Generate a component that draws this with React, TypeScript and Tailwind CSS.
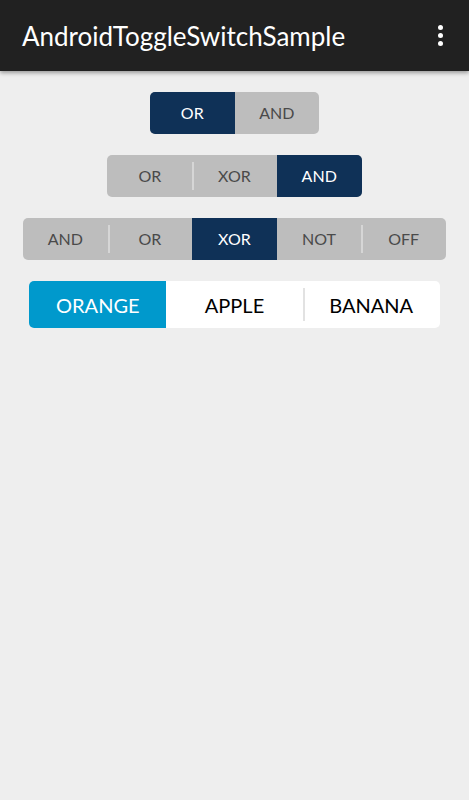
import React from "react";

const NAVY = "bg-[#0f3157]";

function Toggle({ labels, selected, w, h, textSize, selBg, baseBg, textColor, sepColor, rounded }: {
  labels: string[]; selected: number; w: string; h: string; textSize: string; selBg: string; baseBg: string; textColor: string; sepColor: string; rounded: string;
}) {
  return (
    <div className={`flex ${h} ${baseBg} ${rounded} overflow-hidden`}>
      {labels.map((l, i) => {
        const sel = i === selected;
        const showSep = i > 0 && !sel && i - 1 !== selected;
        return (
          <div key={l} className={`relative ${w} flex items-center justify-center ${textSize} ${sel ? selBg + " text-white" : textColor}`}>
            {showSep && <div className={`absolute left-0 top-[7px] bottom-[7px] w-[2px] ${sepColor}`} />}
            {l}
          </div>
        );
      })}
    </div>
  );
}

export default function App() {
  return (
    <div className="min-h-[800px] bg-[#eeeeee] font-['Lato','Noto_Sans',sans-serif]">
      <div className="h-[71px] bg-[#212121] flex items-center justify-between pl-[22px] pr-[26px] shadow-[0_2px_4px_rgba(0,0,0,0.35)] relative">
        <span className="text-white text-[26px] leading-none">AndroidToggleSwitchSample</span>
        <div className="flex flex-col gap-[3px]">
          <div className="w-[5px] h-[5px] rounded-full bg-white" />
          <div className="w-[5px] h-[5px] rounded-full bg-white" />
          <div className="w-[5px] h-[5px] rounded-full bg-white" />
        </div>
      </div>
      <div className="flex flex-col items-center pt-[21px] gap-[21px]">
        <Toggle labels={["OR", "AND"]} selected={0} w="w-[84.5px]" h="h-[42px]" textSize="text-[16px]" selBg={NAVY} baseBg="bg-[#bdbdbd]" textColor="text-[#4a4a4a]" sepColor="bg-[#d6d6d6]" rounded="rounded-[5px]" />
        <Toggle labels={["OR", "XOR", "AND"]} selected={2} w="w-[84.7px]" h="h-[42px]" textSize="text-[16px]" selBg={NAVY} baseBg="bg-[#bdbdbd]" textColor="text-[#4a4a4a]" sepColor="bg-[#d6d6d6]" rounded="rounded-[5px]" />
        <Toggle labels={["AND", "OR", "XOR", "NOT", "OFF"]} selected={2} w="w-[84.6px]" h="h-[42px]" textSize="text-[16px]" selBg={NAVY} baseBg="bg-[#bdbdbd]" textColor="text-[#4a4a4a]" sepColor="bg-[#d6d6d6]" rounded="rounded-[5px]" />
        <Toggle labels={["ORANGE", "APPLE", "BANANA"]} selected={0} w="w-[136.7px]" h="h-[47px]" textSize="text-[20px]" selBg="bg-[#0099cc]" baseBg="bg-white" textColor="text-black" sepColor="bg-[#e2e2e2]" rounded="rounded-[5px]" />
      </div>
    </div>
  );
}
